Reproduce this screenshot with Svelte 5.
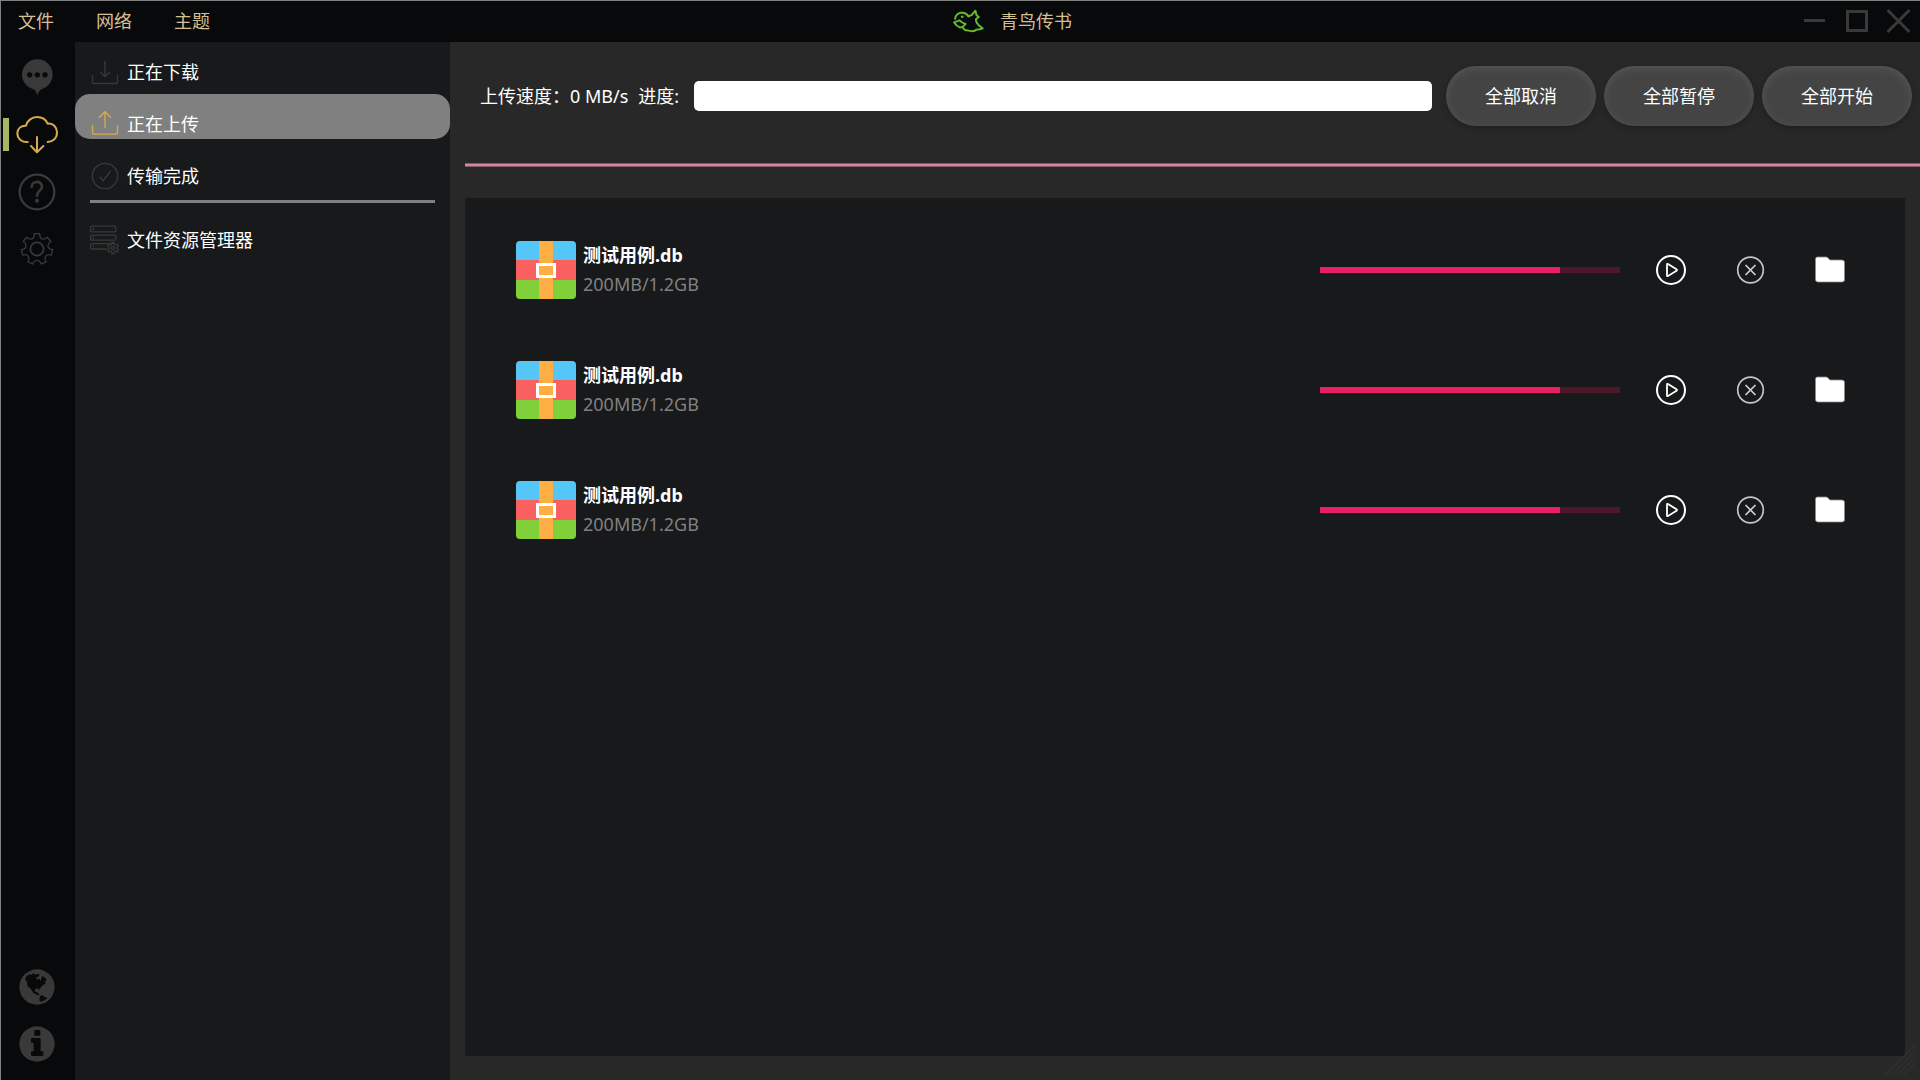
<script lang="ts">
	interface Task {
		name: string;
		size: string;
		percent: number;
	}

	const menus = ['文件', '网络', '主题'];

	const tasks: Task[] = [
		{ name: '测试用例.db', size: '200MB/1.2GB', percent: 80 },
		{ name: '测试用例.db', size: '200MB/1.2GB', percent: 80 },
		{ name: '测试用例.db', size: '200MB/1.2GB', percent: 80 }
	];

	const actions = ['全部取消', '全部暂停', '全部开始'];

	const transfers = [
		{ id: 'download', label: '正在下载' },
		{ id: 'upload', label: '正在上传' },
		{ id: 'done', label: '传输完成' }
	];

	let current = $state('upload');

	// Outline of a gear: flat tooth tops joined by curved valleys
	function gear(teeth: number, outer: number, valley: number, half: number) {
		const step = 360 / teeth;
		const point = (deg: number, r: number) => {
			const rad = ((deg - 90) * Math.PI) / 180;
			return `${(r * Math.cos(rad)).toFixed(2)} ${(r * Math.sin(rad)).toFixed(2)}`;
		};
		let d = `M${point(-half, outer)}`;
		for (let i = 0; i < teeth; i++) {
			const a = i * step;
			d += `L${point(a + half, outer)}`;
			d += `C${point(a + half + 3, valley)} ${point(a + step - half - 3, valley)} ${point(a + step - half, outer)}`;
		}
		return d + 'Z';
	}

	const bigGear = gear(7, 47, 31, 10);
	const smallGear = gear(6, 17, 10, 12);
</script>

{#snippet navIcon(id: string)}
	<svg viewBox="0 0 90 90" width="30" height="30" class="line-icon" aria-hidden="true">
		{#if id === 'download'}
			<path d="M7.500 54V74Q7.500 79.500 13 79.500H77Q82.500 79.500 82.500 74V54M45 12V59M31 45L45 59L59 45" />
		{:else if id === 'upload'}
			<path d="M7.500 49V69Q7.500 75.500 13 75.500H77Q82.500 75.500 82.500 69V49M45 56V9M27 26L45 8L63 26" />
		{:else if id === 'done'}
			<circle cx="45" cy="45" r="38" />
			<path d="M29 47L39 59L62 30" />
		{:else}
			<rect x="1.500" y="3.500" width="76" height="17" rx="5" />
			<rect x="1.500" y="30.500" width="76" height="15" rx="5" />
			<path d="M50 72H6Q1.500 72 1.500 67V61Q1.500 56 6 56H72M10 9V15M10 35V41M10 61V67" />
			<g transform="translate(69 69)">
				<path d={smallGear} />
				<circle r="5" />
			</g>
		{/if}
	</svg>
{/snippet}

<div class="window">
	<header class="titlebar">
		<nav class="menus">
			{#each menus as menu}
				<button>{menu}</button>
			{/each}
		</nav>

		<div class="brand">
			<svg viewBox="100 28 94 72" width="31" height="24" aria-hidden="true">
				<g fill="none" stroke="#63bd2b" stroke-width="6" stroke-linejoin="round">
					<path d="M106 60L108 50Q113 41 122 39H130Q141 40 147 50L156 46L168 33L171 46L178 52L170 58Q168 68 178 77L190 86Q180 91 172 90Q164 97 152 94L136 91L128 83" />
					<path d="M103 68L120 62Q127 70 138 73Q131 83 122 84Q110 80 103 68Z" />
				</g>
				<rect x="124" y="48" width="8" height="6" fill="#63bd2b" />
			</svg>
			<span>青鸟传书</span>
		</div>

		<div class="controls">
			<button aria-label="最小化">
				<svg viewBox="0 0 25 25" width="25" height="25"><path d="M2 12.500H23" /></svg>
			</button>
			<button aria-label="最大化">
				<svg viewBox="0 0 25 25" width="25" height="25"><path d="M3.500 3.500H22.500V22.500H3.500Z" /></svg>
			</button>
			<button aria-label="关闭">
				<svg viewBox="0 0 25 25" width="25" height="25"><path d="M1.500 2L23.500 24M23.500 2L1.500 24" /></svg>
			</button>
		</div>
	</header>

	<div class="body">
		<nav class="rail">
			<button aria-label="消息">
				<svg viewBox="66 59 93 110" width="31" height="37">
					<circle cx="112" cy="105" r="46" fill="#393939" />
					<path d="M98 148Q109 152 112 169Q116 153 127 148Z" fill="#393939" />
					<g fill="#08090b">
						<circle cx="89" cy="106" r="8" />
						<circle cx="112" cy="106" r="8" />
						<circle cx="135" cy="106" r="8" />
					</g>
				</svg>
			</button>
			<button class="active" aria-label="传输">
				<svg viewBox="49 228 126 114" width="42" height="38" class="rail-line">
					<path
						d="M84 306C68 307 53 297 53 280C53 266 64 256 79 257C83 241 97 231 112 231C127 231 139 239 144 251C160 248 172 262 172 277C172 295 160 305 144 306M112 291V336M94 318L112 337L131 318"
						stroke="#d7ab4e"
						stroke-width="6"
					/>
				</svg>
			</button>
			<button aria-label="帮助">
				<svg viewBox="56 399 114 114" width="38" height="38" class="rail-line">
					<circle cx="113" cy="456" r="52" stroke-width="7" />
					<path d="M97 441C97 421 128 421 128 440C128 454 113 451 113 467" stroke-width="8" />
					<circle cx="113" cy="482" r="6" fill="#393939" stroke="none" />
				</svg>
			</button>
			<button aria-label="设置">
				<svg viewBox="-51 -51 102 102" width="34" height="34" class="rail-line">
					<path d={bigGear} stroke-width="4" />
					<circle r="20" stroke-width="5" />
				</svg>
			</button>

			<button class="bottom" aria-label="网站">
				<svg viewBox="58 86 108 108" width="36" height="36">
					<circle cx="112" cy="140" r="53" fill="#393939" />
					<g fill="#08090b">
						<path d="M76 118L81 107L91 101L96 104L101 98L107 103L114 100L120 103L117 108L109 112L113 118L119 115L123 122L127 107L137 112L142 122L135 121L139 128L130 134L121 144L118 151L117 144L107 146L105 154L112 155L119 163L122 165L112 164L101 158L93 145L83 137L82 124Z" />
						<path d="M121 168L128 164L134 170L143 171L137 179L123 184L119 180Z" />
					</g>
				</svg>
			</button>
			<button aria-label="关于">
				<svg viewBox="58 258 108 108" width="36" height="36">
					<circle cx="112" cy="312" r="53" fill="#393939" />
					<rect x="104" y="270" width="18" height="17" rx="3" fill="#08090b" />
					<path d="M95 294H120Q123 294 123 297V334H128Q131 334 131 337V345Q131 348 128 348H97Q94 348 94 345V337Q94 334 97 334H102V308H97Q94 308 94 305V295Z" fill="#08090b" />
				</svg>
			</button>
		</nav>

		<aside class="sidebar">
			{#each transfers as item}
				<button class="nav-item" class:selected={current === item.id} onclick={() => (current = item.id)}>
					{@render navIcon(item.id)}
					<span>{item.label}</span>
				</button>
			{/each}
			<hr />
			<button class="nav-item">
				{@render navIcon('files')}
				<span>文件资源管理器</span>
			</button>
		</aside>

		<main>
			<div class="toolbar">
				<span class="speed">上传速度：0 MB/s</span>
				<label for="total">进度:</label>
				<progress id="total" class="total" value="0" max="100"></progress>
				<div class="actions">
					{#each actions as action}
						<button>{action}</button>
					{/each}
				</div>
			</div>

			<div class="rule"></div>

			<ul class="tasks">
				{#each tasks as task}
					<li>
						<svg viewBox="0 0 60 58" width="60" height="58" class="archive" aria-hidden="true">
							<rect width="60" height="19" fill="#55c6f8" />
							<rect y="19" width="60" height="20" fill="#fb6060" />
							<rect y="39" width="60" height="19" fill="#80d03b" />
							<rect x="23" width="14" height="58" fill="#ffae43" />
							<rect x="21.500" y="23.500" width="17" height="12" fill="none" stroke="#fff" stroke-width="3" />
						</svg>
						<div class="info">
							<strong>{task.name}</strong>
							<span>{task.size}</span>
						</div>
						<progress class="bar" value={task.percent} max="100" aria-label={task.name}></progress>
						<div class="task-actions">
							<button aria-label="开始">
								<svg viewBox="0 0 32 32" width="32" height="32">
									<circle cx="16" cy="16" r="14" fill="none" stroke="#fff" stroke-width="2" />
									<path d="M12 10.500V21.500Q12 22.500 13 22L21.500 16.800Q22.500 16 21.500 15.300L13 10Q12 9.500 12 10.500Z" fill="none" stroke="#fff" stroke-width="1.800" />
								</svg>
							</button>
							<button aria-label="取消">
								<svg viewBox="0 0 32 32" width="32" height="32">
									<circle cx="15.500" cy="16" r="12.800" fill="none" stroke="#c4c4c4" stroke-width="1.700" />
									<path d="M10.500 11L20.500 21M20.500 11L10.500 21" stroke="#d0d0d0" stroke-width="1.700" />
								</svg>
							</button>
							<button aria-label="打开文件夹">
								<svg viewBox="0 0 32 32" width="32" height="32">
									<path d="M1.500 5Q1.500 3 3.500 3H12Q13.500 3 14.500 4.500L16 6H28Q30.500 6 30.500 8.500V25.500Q30.500 28 28 28H4Q1.500 28 1.500 25.500Z" fill="#fff" stroke="#8c8c8c" stroke-width="0.800" />
								</svg>
							</button>
						</div>
					</li>
				{/each}
			</ul>
		</main>
	</div>

	<svg viewBox="0 0 90 90" width="30" height="30" class="grip" aria-hidden="true">
		<path d="M0 90L90 0M20 90L90 20M37 90L90 37M55 90L90 55" stroke="#303030" stroke-width="4" />
	</svg>
</div>

<style>
	:global(body) {
		margin: 0;
		background: #282828;
	}

	.window {
		position: relative;
		display: flex;
		flex-direction: column;
		box-sizing: border-box;
		min-height: 100vh;
		border-top: 1px solid #7f8080;
		border-left: 1px solid #7f8080;
		background: #282828;
		color: #fff;
		font-family: 'Noto Sans', 'Noto Sans CJK SC', sans-serif;
		font-size: 18px;
		line-height: 30px;
	}

	button {
		margin: 0;
		padding: 0;
		border: 0;
		background: none;
		color: inherit;
		font: inherit;
		cursor: pointer;
	}

	svg {
		display: block;
		flex: none;
	}

	.titlebar {
		display: flex;
		align-items: center;
		justify-content: space-between;
		box-sizing: border-box;
		height: 41px;
		padding-bottom: 2px;
		background: #08090b;
		color: #d6bf93;
	}

	.menus {
		display: flex;
		gap: 8px;
	}

	.menus button {
		padding: 0 17px;
	}

	.brand {
		display: flex;
		align-items: center;
		gap: 16px;
	}

	.controls {
		display: flex;
		gap: 17px;
		padding: 0 9px 0 4px;
	}

	.controls path {
		fill: none;
		stroke: #393939;
		stroke-width: 3;
	}

	.body {
		display: flex;
		flex: 1;
	}

	.rail {
		display: flex;
		flex-direction: column;
		flex: none;
		box-sizing: border-box;
		width: 74px;
		padding: 7px 0 8px;
		background: #08090b;
	}

	.rail button {
		position: relative;
		display: flex;
		align-items: center;
		justify-content: center;
		height: 57px;
		padding-right: 2px;
	}

	.rail .bottom {
		margin-top: auto;
	}

	.rail .active::before {
		content: '';
		position: absolute;
		left: 2px;
		top: 12px;
		width: 6px;
		height: 33px;
		background: #a9b665;
	}

	.rail-line {
		fill: none;
		stroke: #393939;
		stroke-linecap: round;
		stroke-linejoin: round;
	}

	.sidebar {
		display: flex;
		flex-direction: column;
		flex: none;
		gap: 7px;
		width: 375px;
		background: #17191a;
	}

	.nav-item {
		display: flex;
		align-items: center;
		gap: 7px;
		box-sizing: border-box;
		height: 45px;
		padding: 15px 15px 0;
		border-radius: 15px;
	}

	.nav-item.selected {
		background: #808080;
	}

	.line-icon {
		fill: none;
		stroke: #393939;
		stroke-width: 4;
	}

	.selected .line-icon {
		stroke: #d7ab4e;
	}

	.sidebar hr {
		width: 345px;
		height: 3px;
		margin: 2px auto 0;
		border: 0;
		background: #808080;
	}

	main {
		display: flex;
		flex: 1;
		flex-direction: column;
		min-width: 0;
		padding-left: 15px;
	}

	.toolbar {
		display: flex;
		align-items: center;
		gap: 8px;
		padding: 24px 8px 37px 15px;
	}

	.speed {
		padding-right: 2px;
	}

	progress {
		display: block;
		appearance: none;
		border: 0;
	}

	.total {
		flex: 1;
		height: 30px;
		margin: 0 6px 0 7px;
		overflow: hidden;
		border-radius: 5px;
		background: #fff;
	}

	.total::-webkit-progress-bar {
		background: #fff;
	}

	.actions {
		display: flex;
		gap: 8px;
	}

	.actions button {
		width: 150px;
		height: 60px;
		border-radius: 30px;
		background: #444;
		box-shadow:
			inset 0 2px 10px rgba(255, 255, 255, 0.1),
			0 2px 6px rgba(0, 0, 0, 0.25);
	}

	.rule {
		box-sizing: border-box;
		height: 4px;
		border: solid #80586a;
		border-width: 1px 0;
		background: #d9869f;
	}

	.tasks {
		flex: 1;
		margin: 31px 15px 24px 0;
		padding: 12px 0;
		background: #17191a;
		list-style: none;
	}

	.tasks li {
		display: flex;
		align-items: center;
		height: 120px;
		padding: 0 35px 0 51px;
	}

	.archive {
		border-radius: 4px;
	}

	.info {
		display: flex;
		flex: 1;
		flex-direction: column;
		padding: 0 0 1px 7px;
		line-height: 29px;
	}

	.info span {
		color: #808080;
	}

	.bar {
		width: 300px;
		height: 6px;
	}

	.bar::-webkit-progress-bar {
		background: #4e182b;
	}

	.bar::-webkit-progress-value {
		background: #e91e63;
	}

	.task-actions {
		display: flex;
		justify-content: space-between;
		width: 191px;
		padding: 0 24px 0 35px;
	}

	.grip {
		position: absolute;
		right: 5px;
		bottom: 5px;
	}
</style>
